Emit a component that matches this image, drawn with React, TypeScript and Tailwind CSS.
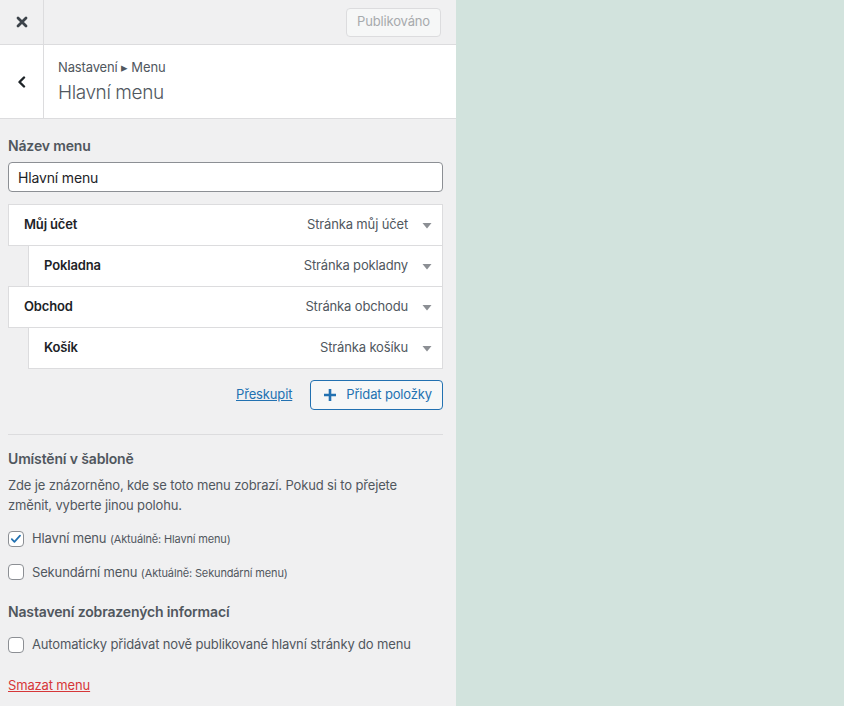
import React from 'react';

const items = [
  { title: 'Můj účet', type: 'Stránka můj účet', depth: 0 },
  { title: 'Pokladna', type: 'Stránka pokladny', depth: 1 },
  { title: 'Obchod', type: 'Stránka obchodu', depth: 0 },
  { title: 'Košík', type: 'Stránka košíku', depth: 1 },
];

const Checkbox: React.FC<{ checked?: boolean }> = ({ checked }) => (
  <span className="flex h-4 w-4 shrink-0 items-center justify-center rounded border border-[#8c8f94] bg-white">
    {checked && (
      <svg viewBox="0 0 16 16" className="h-[14px] w-[14px]">
        <path d="M3.2 8.2l3 3 6.4-7" fill="none" stroke="#2271b1" strokeWidth="2" strokeLinecap="round" strokeLinejoin="round" />
      </svg>
    )}
  </span>
);

const App: React.FC = () => {
  return (
    <div className="flex h-[706px] w-[844px] overflow-hidden font-['Inter',sans-serif] tracking-[-0.15px] text-[#1d2327]">
      <div className="flex w-[456px] shrink-0 flex-col bg-[#f0f0f1]">
        {/* Top bar */}
        <div className="flex h-[45px] shrink-0 items-center border-b border-[#dcdcde]">
          <div className="flex h-full w-[44px] items-center justify-center border-r border-[#dcdcde]">
            <svg viewBox="0 0 12 12" className="h-3 w-3">
              <path d="M2 2l8 8M10 2l-8 8" stroke="#3c434a" strokeWidth="2.8" strokeLinecap="round" />
            </svg>
          </div>
          <div className="flex-1" />
          <div className="mr-[15px] flex h-[29px] items-center rounded border border-[#dcdcde] bg-[#f6f7f7] px-[10px] text-[13px] text-[#a7aaad]">
            Publikováno
          </div>
        </div>

        {/* Section header */}
        <div className="flex h-[74px] shrink-0 border-b border-[#dcdcde] bg-white">
          <div className="flex w-[44px] items-center justify-center border-r border-[#dcdcde]">
            <svg viewBox="0 0 12 12" className="h-3 w-3">
              <path d="M8 1.5L3.5 6 8 10.5" fill="none" stroke="#1d2327" strokeWidth="2.4" strokeLinecap="round" strokeLinejoin="round" />
            </svg>
          </div>
          <div className="flex flex-col justify-center pl-[14px]">
            <div className="text-[13px] leading-[18px] text-[#50575e]">Nastavení ▸ Menu</div>
            <div className="mt-[4px] text-[19px] font-light leading-[26px] tracking-[-0.4px] text-[#50575e]">Hlavní menu</div>
          </div>
        </div>

        <div className="flex flex-col pl-[8px] pr-[13px] pt-[17px]">
          <div className="text-[14px] font-semibold leading-[20px] text-[#50575e]">Název menu</div>
          <div className="mt-[6px] flex h-[30px] items-center rounded border border-[#8c8f94] bg-white px-[9px] text-[14px]">
            Hlavní menu
          </div>

          <div className="mt-[12px] flex flex-col">
            {items.map((it, i) => (
              <div
                key={i}
                className={`flex h-[42px] items-center border border-[#dcdcde] bg-white pr-[10px] ${it.depth ? 'ml-[20px] pl-[15px]' : 'pl-[15px]'} ${i > 0 ? '-mt-px' : ''}`}
              >
                <span className="flex-1 text-[13px] font-semibold">{it.title}</span>
                <span className="text-[13px] text-[#50575e]">{it.type}</span>
                <svg viewBox="0 0 10 10" className="ml-[14px] h-[10px] w-[10px]">
                  <path d="M0.5 3h9L5 8.5z" fill="#8c8f94" />
                </svg>
              </div>
            ))}
          </div>

          <div className="mt-[11px] flex items-center justify-end gap-[18px]">
            <span className="text-[13px] text-[#2271b1] underline">Přeskupit</span>
            <div className="flex h-[30px] items-center gap-[9px] rounded border border-[#2271b1] bg-[#f6f7f7] pl-[12px] pr-[10px] text-[13px] text-[#2271b1]">
              <svg viewBox="0 0 14 14" className="h-[14px] w-[14px]">
                <path d="M7 1v12M1 7h12" stroke="#2271b1" strokeWidth="2.6" />
              </svg>
              Přidat položky
            </div>
          </div>

          <div className="mt-[24px] border-t border-[#dcdcde]" />

          <div className="mt-[14px] text-[14px] font-semibold leading-[20px] text-[#50575e]">Umístění v šabloně</div>
          <p className="mt-[6px] text-[13px] leading-[20px] text-[#50575e]">
            Zde je znázorněno, kde se toto menu zobrazí. Pokud si to přejete změnit, vyberte jinou polohu.
          </p>
          <div className="mt-[14px] flex items-center gap-[8px] text-[13px] text-[#50575e]">
            <Checkbox checked />
            <span>
              Hlavní menu <span className="text-[11px]">(Aktuálně: Hlavní menu)</span>
            </span>
          </div>
          <div className="mt-[14px] flex items-center gap-[8px] text-[13px] text-[#50575e]">
            <Checkbox />
            <span>
              Sekundární menu <span className="text-[11px]">(Aktuálně: Sekundární menu)</span>
            </span>
          </div>

          <div className="mt-[20px] text-[14px] font-semibold leading-[20px] text-[#50575e]">Nastavení zobrazených informací</div>
          <div className="mt-[13px] flex items-center gap-[8px] text-[13px] text-[#50575e]">
            <Checkbox />
            <span>Automaticky přidávat nově publikované hlavní stránky do menu</span>
          </div>

          <div className="mt-[21px] text-[13px] text-[#d63638] underline">Smazat menu</div>
        </div>
      </div>
      <div className="flex-1 bg-[#d2e3dd]" />
    </div>
  );
};

export default App;
